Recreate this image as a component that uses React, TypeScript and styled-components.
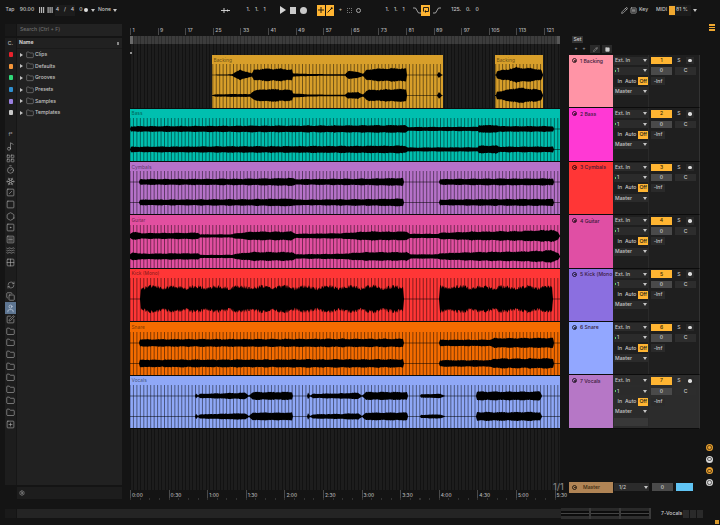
import React from 'react';
import styled, { createGlobalStyle } from 'styled-components';
import {
  Copy, Folder, Grid2x2, Hexagon, LayoutGrid, Music2, Pencil, RefreshCw, Settings, Snowflake,
  Square, SquareDot, SquareMenu, SquarePen, SquarePlus, SquareSlash, Timer, User, Waves,
} from 'lucide-react';

type Env = [number, number][];

interface ClipData {
  x0: number;
  x1: number;
  ch1: Env;
  ch2?: Env;
  mono?: boolean;
}

interface Track {
  name: string;
  strip: string;
  color: string;
  clips: ClipData[];
}

const GRID_LEFT = 130;
const BAR = 3.45;
const BODY_H = 44;

const backing1: Env = [[212, 0.3], [232, 0.7], [235, 2.5], [240, 4.5], [247, 3], [252, 1.5], [254, 5], [268, 6], [282, 5.5], [292, 5], [293, 1.5], [308, 1], [345, 0.7], [348, 3.5], [358, 3], [363, 1], [367, 5], [385, 6], [406, 6], [407, 0.3], [437, 0.3], [439, 3], [442, 0.3]];
const backing1b: Env = [[212, 0.3], [215, 1], [240, 1.4], [250, 1.2], [254, 4.5], [268, 6], [282, 5.5], [292, 5], [293, 2], [308, 1], [345, 0.7], [348, 3], [358, 3], [363, 1], [367, 5], [385, 5.5], [406, 6], [407, 0.3], [437, 0.3], [439, 3], [442, 0.3]];
const backing2: Env = [[496, 0.5], [497, 3.5], [518, 7], [532, 6], [541, 5], [543, 0.5]];
const bass: Env = [[130, 0.3], [131, 2.5], [258, 3], [292, 3], [405, 3.5], [408, 1.8], [478, 2], [479, 3.5], [497, 3.6], [499, 2.6], [553, 2.6], [554, 0.3], [560, 0.3]];
const cymbals: Env = [[130, 0.3], [139, 0.3], [140, 2.6], [252, 3], [292, 3.6], [296, 2.6], [365, 3], [403, 3.6], [404, 0.3], [439, 0.3], [440, 2.6], [478, 3], [553, 3.2], [554, 0.3], [560, 0.3]];
const guitar: Env = [[130, 2], [133, 3.8], [142, 2.6], [198, 3], [200, 1.5], [232, 1.5], [235, 2.4], [252, 4], [292, 4], [296, 2], [342, 2.5], [365, 4], [407, 4], [410, 2], [438, 2], [440, 3], [478, 4], [520, 4.5], [552, 5.6], [558, 3.5], [560, 0.3]];
const kick: Env = [[130, 0.3], [140, 0.3], [141, 14.5], [403, 14.5], [404, 0.3], [439, 0.3], [440, 14.5], [552, 14.5], [553, 0.3], [560, 0.3]];
const snare: Env = [[130, 0.3], [139, 0.3], [140, 3.4], [250, 3.6], [320, 3.8], [403, 3.8], [404, 0.3], [439, 0.3], [440, 3], [490, 3], [494, 4.4], [553, 4.6], [554, 0.3], [560, 0.3]];
const vocals: Env = [[130, 0.3], [195, 0.3], [196, 2.5], [198, 0.6], [200, 2], [218, 2.4], [245, 3], [249, 0.5], [253, 3.6], [292, 3.6], [293, 0.3], [307, 0.3], [308, 3.2], [310, 0.4], [313, 2], [340, 2.4], [358, 3], [362, 0.5], [366, 3.6], [407, 3.6], [408, 0.3], [420, 0.3], [421, 1.5], [440, 2], [445, 0.3], [476, 0.3], [477, 4], [540, 4], [542, 0.3], [560, 0.3]];

const tracks: Track[] = [
  { name: 'Backing', strip: '1 Backing', color: '#d89f2a', clips: [{ x0: 212, x1: 443, ch1: backing1, ch2: backing1b }, { x0: 495, x1: 543, ch1: backing2 }] },
  { name: 'Bass', strip: '2 Bass', color: '#00bfaf', clips: [{ x0: 130, x1: 560, ch1: bass }] },
  { name: 'Cymbals', strip: '3 Cymbals', color: '#b672c9', clips: [{ x0: 130, x1: 560, ch1: cymbals }] },
  { name: 'Guitar', strip: '4 Guitar', color: '#e24fa0', clips: [{ x0: 130, x1: 560, ch1: guitar }] },
  { name: 'Kick (Mono)', strip: '5 Kick (Mono', color: '#ff3636', clips: [{ x0: 130, x1: 560, ch1: kick, mono: true }] },
  { name: 'Snare', strip: '6 Snare', color: '#f56c00', clips: [{ x0: 130, x1: 560, ch1: snare }] },
  { name: 'Vocals', strip: '7 Vocals', color: '#8fa8f7', clips: [{ x0: 130, x1: 560, ch1: vocals }] },
];

const stripColors = ['#ff94a6', '#ff39d4', '#ff3636', '#e04fa4', '#8b6fe0', '#92a7ff', '#b677c6'];
const swatches = ['#e8222c', '#f5963a', '#2fd878', '#2e8fd0', '#9a80e0', '#c8c8c8'];
const browserItems = ['Clips', 'Defaults', 'Grooves', 'Presets', 'Samples', 'Templates'];
const barLabels = ['1', '9', '17', '25', '33', '41', '49', '57', '65', '73', '81', '89', '97', '105', '113', '121'];
const timeLabels = ['0:00', '0:30', '1:00', '1:30', '2:00', '2:30', '3:00', '3:30', '4:00', '4:30', '5:00', '5:30'];
const upperIcons = [Music2, LayoutGrid, Timer, Snowflake, SquareSlash, Square, Hexagon, SquareDot, SquareMenu, Waves, Grid2x2];
const lowerIcons = [Copy, User, SquarePen, Folder, Folder, Folder, Folder, Folder, Folder, Folder, Folder, SquarePlus];

const noise = (x: number, seed: number) => {
  const v = Math.sin(x * 12.9898 + seed * 78.233) * 43758.5453;
  return v - Math.floor(v);
};

const envAt = (pts: Env, x: number) => {
  if (x <= pts[0][0]) return pts[0][1];
  for (let i = 1; i < pts.length; i++) {
    if (x <= pts[i][0]) {
      const [ax, ay] = pts[i - 1];
      const [bx, by] = pts[i];
      return ay + ((by - ay) * (x - ax)) / (bx - ax || 1);
    }
  }
  return pts[pts.length - 1][1];
};

const wavePath = (pts: Env, x0: number, x1: number, cy: number, seed: number, mono?: boolean) => {
  const top: string[] = [];
  const bottom: string[] = [];
  for (let x = x0; x <= x1; x += 0.5) {
    const base = envAt(pts, x);
    let amp = base;
    if (base > 1) {
      const slow = 0.96 + 0.06 * Math.sin(x * 0.45 + seed);
      amp = base * slow * (1.02 + 0.18 * noise(x, seed));
    }
    if (mono && base > 1) {
      const pulse = Math.abs(Math.sin((Math.PI * (x - 141)) / 22));
      amp = base * (0.8 + 0.2 * pulse) * (0.72 + 0.28 * noise(x, seed));
    }
    top.push(`${(x - x0).toFixed(1)} ${(cy - amp).toFixed(2)}`);
    bottom.unshift(`${(x - x0).toFixed(1)} ${(cy + amp * (mono ? 1 : 0.95)).toFixed(2)}`);
  }
  return `M${top.join('L')}L${bottom.join('L')}Z`;
};

const gridPath = (x0: number, x1: number) => {
  let d = '';
  for (let n = 0; GRID_LEFT + n * BAR < x1; n++) {
    const x = GRID_LEFT + n * BAR;
    if (x >= x0) d += `M${(x - x0).toFixed(2)} 0V${BODY_H}`;
  }
  return d;
};

const Wave: React.FC<{ clip: ClipData; seed: number }> = ({ clip, seed }) => {
  const { x0, x1, ch1, ch2, mono } = clip;
  const w = x1 - x0;
  return (
    <WaveSvg viewBox={`0 0 ${w} ${BODY_H}`} preserveAspectRatio="none">
      <path d={gridPath(x0, x1)} stroke="#000" strokeOpacity={0.6} strokeWidth={0.8} fill="none" />
      {mono ? (
        <path d={wavePath(ch1, x0, x1, 21, seed, true)} fill="#000" />
      ) : (
        <>
          <path d={wavePath(ch1, x0, x1, 11, seed)} fill="#000" />
          <path d={wavePath(ch2 || ch1, x0, x1, 31.5, seed + 3)} fill="#000" />
        </>
      )}
    </WaveSvg>
  );
};

const Caret = styled.span`
  display: inline-block;
  flex: none;
  width: 0;
  height: 0;
  border-left: 2px solid transparent;
  border-right: 2px solid transparent;
  border-top: 3px solid #c4c4c4;
`;

const TransportIcon: React.FC<{ kind: string }> = ({ kind }) => {
  if (kind === 'follow') {
    return (
      <svg width="9" height="5" viewBox="0 0 9 5">
        <path d="M0 2.5H9M3 0V5M6.5 1.5V3.5" stroke="#ddd" strokeWidth="0.9" fill="none" />
      </svg>
    );
  }
  if (kind === 'bars') {
    return (
      <svg width="14" height="6" viewBox="0 0 14 6">
        <path d="M0 0H1.2V6H0ZM2 0H3.2V6H2ZM4 0H5.2V6H4ZM8.5 0H9.7V6H8.5ZM10.5 0H11.7V6H10.5ZM12.5 0H13.7V6H12.5Z" fill="#b5b5b5" />
      </svg>
    );
  }
  if (kind === 'fadeOut') {
    return (
      <svg width="8" height="7" viewBox="0 0 8 7">
        <path d="M0 1H2.5L5.5 6H8" stroke="#c4c4c4" strokeWidth="0.8" fill="none" />
      </svg>
    );
  }
  if (kind === 'fadeIn') {
    return (
      <svg width="8" height="7" viewBox="0 0 8 7">
        <path d="M0 6H2.5L5.5 1H8" stroke="#c4c4c4" strokeWidth="0.8" fill="none" />
      </svg>
    );
  }
  if (kind === 'loop') {
    return (
      <svg width="6" height="6" viewBox="0 0 6 6">
        <path d="M.5 4.5V.5H5.5V4.5H2.5" stroke="#111" strokeWidth="0.9" fill="none" />
        <path d="M3 3V6L1.4 4.5Z" fill="#111" />
      </svg>
    );
  }
  if (kind === 'draw') {
    return (
      <svg width="6" height="6" viewBox="0 0 6 6">
        <path d="M.5 5.5L4.5 1.5" stroke="#111" strokeWidth="0.9" />
        <circle cx="4.7" cy="1.3" r="1" fill="#111" />
      </svg>
    );
  }
  return (
    <svg width="6" height="6" viewBox="0 0 6 6">
      <path d="M3 0V6M0 3H6" stroke="#111" strokeWidth="0.9" />
    </svg>
  );
};

const MixerStrip: React.FC<{ track: Track; color: string; index: number; selected: boolean }> = ({ track, color, index, selected }) => (
  <Strip $selected={selected}>
    <StripTitle $color={color}>
      <ActivatorDot />
      <StripName>{track.strip}</StripName>
    </StripTitle>
    <StripInputs>
      <SelectBox>Ext. In<Caret /></SelectBox>
      <SelectBox><SendLabel><GreenTick />1</SendLabel><Caret /></SelectBox>
      <MonitorRow>
        <MonitorBtn>In</MonitorBtn>
        <MonitorBtn>Auto</MonitorBtn>
        <MonitorBtn $on>Off</MonitorBtn>
      </MonitorRow>
      <SelectBox>Master<Caret /></SelectBox>
      {selected && <BlankBox />}
    </StripInputs>
    <StripFaders>
      <FaderRow>
        <TrackNumber>{index + 1}</TrackNumber>
        <SoloLabel>S</SoloLabel>
        <ArmDot />
      </FaderRow>
      <FaderRow>
        <VolumeBox>0</VolumeBox>
        <PanBox>C</PanBox>
      </FaderRow>
      <FaderRow>
        <InfBox>-Inf</InfBox>
      </FaderRow>
    </StripFaders>
  </Strip>
);

const App: React.FC = () => {
  return (
    <Page>
      <GlobalStyle />
      <TopBar>
        <Cell $w={10} $ml={5}>Tap</Cell>
        <Cell $w={14} $ml={5}>90.00</Cell>
        <Cell $w={14} $ml={5}><TransportIcon kind="bars" /></Cell>
        <BoxedCell $w={20} $ml={2}><Spaced>4 / 4</Spaced></BoxedCell>
        <Cell $w={9} $ml={4}>0<RecDot $size={4} $color="#ddd" /></Cell>
        <Cell $w={6} $ml={2}><Caret /></Cell>
        <Cell $w={13} $ml={2}>None</Cell>
        <Cell $w={6} $ml={1}><Caret /></Cell>

        <Cell $w={9} $ml={103}><TransportIcon kind="follow" /></Cell>
        <Cell $w={26} $ml={13}><Spaced>1. 1. 1</Spaced></Cell>
        <Cell $w={6} $ml={11}><PlayShape /></Cell>
        <Cell $w={6} $ml={4}><StopShape /></Cell>
        <Cell $w={7} $ml={4}><RecDot $size={7} $color="#c9c9c9" /></Cell>
        <OrangeCell $w={9} $ml={10}><TransportIcon kind="plus" /></OrangeCell>
        <OrangeCell $w={9} $ml={0}><TransportIcon kind="draw" /></OrangeCell>
        <Cell $w={5} $ml={3}>+</Cell>
        <Cell $w={5} $ml={4}><DottedBox /></Cell>
        <Cell $w={5} $ml={4}><RingShape /></Cell>
        <Cell $w={26} $ml={21}><Spaced>1. 1. 1</Spaced></Cell>
        <Cell $w={8} $ml={5}><TransportIcon kind="fadeOut" /></Cell>
        <OrangeCell $w={10} $ml={0}><TransportIcon kind="loop" /></OrangeCell>
        <Cell $w={8} $ml={2}><TransportIcon kind="fadeIn" /></Cell>
        <Cell $w={34} $ml={7}><Spaced>125. 0. 0</Spaced></Cell>

        <Cell $w={7} $ml={139}><Pencil size={7} color="#ddd" strokeWidth={2} /></Cell>
        <Cell $w={7} $ml={2}><SquareMenu size={7} color="#ccc" strokeWidth={2} /></Cell>
        <Cell $w={9} $ml={2}>Key</Cell>
        <Cell $w={11} $ml={8}>MIDI</Cell>
        <CpuMeter><CpuFill style={{ width: 6 }} />81 %</CpuMeter>
        <Cell $w={5} $ml={1}><Caret /></Cell>
      </TopBar>

      <Main>
        <Sidebar>
          <SearchRow>
            <SearchLead />
            <SearchBox>Search (Ctrl + F)</SearchBox>
          </SearchRow>
          <BrowserPanel>
            <SideStrip>
              <StripHeader>C.</StripHeader>
              {swatches.map((c) => (
                <SwatchRow key={c}><Swatch $color={c} /></SwatchRow>
              ))}
              <IconGroup $top={10.6}>
                <SwatchRow><SmallMark>f°</SmallMark></SwatchRow>
                {upperIcons.map((Icon, i) => (
                  <SwatchRow key={i}><Icon size={9} color="#b0b0b0" strokeWidth={1.6} /></SwatchRow>
                ))}
              </IconGroup>
              <IconGroup $top={10.8}>
                <SwatchRow><RefreshCw size={8} color="#b0b0b0" strokeWidth={1.6} /></SwatchRow>
                {lowerIcons.map((Icon, i) => (
                  <SwatchRow key={i} $active={i === 1}>
                    <Icon size={9} color={i === 1 ? '#d5deea' : '#b0b0b0'} strokeWidth={1.6} />
                  </SwatchRow>
                ))}
              </IconGroup>
            </SideStrip>
            <BrowserList>
              <BrowserHeader>
                <span>Name</span>
                <SortMark />
              </BrowserHeader>
              {browserItems.map((item) => (
                <BrowserRow key={item}>
                  <RightCaret />
                  <Folder size={8} color="#bdbdbd" strokeWidth={1.2} />
                  <span>{item}</span>
                </BrowserRow>
              ))}
            </BrowserList>
          </BrowserPanel>
          <InfoBox><Settings size={6} color="#aaa" strokeWidth={2} /></InfoBox>
        </Sidebar>

        <Arrange>
          <BarRuler>
            {barLabels.map((l) => (
              <BarMark key={l}>{l}</BarMark>
            ))}
          </BarRuler>
          <ScrubBar />
          <LaneGap><StartDot /></LaneGap>
          {tracks.map((track, t) => (
            <Lane key={track.name} $first={t === 0}>
              {track.clips.map((clip, c) => (
                <Clip
                  key={c}
                  $color={track.color}
                  $w={clip.x1 - clip.x0}
                  $gap={clip.x0 - (c === 0 ? GRID_LEFT : track.clips[c - 1].x1)}
                >
                  <ClipLabel>{track.name}</ClipLabel>
                  <Wave clip={clip} seed={t * 7 + c + 1} />
                </Clip>
              ))}
            </Lane>
          ))}
          <EmptyLanes />
          <TimeRuler>
            {timeLabels.map((l) => (
              <TimeMark key={l}>{l}</TimeMark>
            ))}
          </TimeRuler>
        </Arrange>

        <MixerColumn>
          <MixerHeader>
            <SetButton>Set</SetButton>
            <MixerTools>
              <ToolMark>+</ToolMark>
              <ToolMark>+</ToolMark>
              <ToolBox><Pencil size={5} color="#bbb" strokeWidth={2} /></ToolBox>
              <ToolBox><Square size={5} color="#ccc" fill="#ccc" /></ToolBox>
            </MixerTools>
          </MixerHeader>
          {tracks.map((track, i) => (
            <MixerStrip key={track.name} track={track} color={stripColors[i]} index={i} selected={i === 6} />
          ))}
          <MasterRow>
            <MasterTitle>
              <ActivatorDot />
              <MasterName>Master</MasterName>
            </MasterTitle>
            <MasterSelect>1/2<Caret /></MasterSelect>
            <VolumeBox>0</VolumeBox>
            <CueBox />
          </MasterRow>
          <PageCount>1/1</PageCount>
        </MixerColumn>

        <RightRail>
          <MenuIcon>
            <MenuLine />
            <MenuLine />
            <MenuLine />
          </MenuIcon>
          <RailButtons>
            <RailButton $color="#e8a030" />
            <RailButton $color="#d8d8d8" />
            <RailButton $color="#e8a030" />
            <RailButton $color="#d8d8d8" />
          </RailButtons>
        </RightRail>
      </Main>

      <BottomBar>
        <BottomLead />
        <StatusField />
        <Overview />
        <SelectedName>7-Vocals</SelectedName>
        <MidiGrid>
          {[0, 1, 2].map((i) => <MidiCell key={i} />)}
        </MidiGrid>
        <CornerMark />
      </BottomBar>
    </Page>
  );
};

const GlobalStyle = createGlobalStyle`
  html, body {
    margin: 0;
    padding: 0;
    background: #141414;
  }
  * {
    box-sizing: border-box;
  }
`;

const Page = styled.div`
  width: 720px;
  height: 525px;
  overflow: hidden;
  display: flex;
  flex-direction: column;
  background: #141414;
  color: #c4c4c4;
  font-family: "Inter", "Liberation Sans", sans-serif;
  font-size: 5.1px;
  font-weight: 500;
  line-height: 1;
`;

const TopBar = styled.div`
  display: flex;
  align-items: center;
  flex: none;
  height: 22px;
  padding-bottom: 2px;
`;

const Cell = styled.div<{ $w: number; $ml: number }>`
  display: flex;
  align-items: center;
  justify-content: center;
  gap: 1px;
  flex: none;
  white-space: nowrap;
  width: ${(p) => p.$w}px;
  margin-left: ${(p) => p.$ml}px;
`;

const BoxedCell = styled(Cell)`
  height: 11px;
  background: #1c1c1c;
`;

const OrangeCell = styled(Cell)`
  height: 11px;
  background: #ffb532;
  border-right: 1px solid #141414;
`;

const Spaced = styled.span`
  word-spacing: 3.5px;
`;

const RecDot = styled.span<{ $size: number; $color: string }>`
  display: inline-block;
  width: ${(p) => p.$size}px;
  height: ${(p) => p.$size}px;
  border-radius: 50%;
  background: ${(p) => p.$color};
`;

const PlayShape = styled.span`
  width: 0;
  height: 0;
  border-top: 4px solid transparent;
  border-bottom: 4px solid transparent;
  border-left: 6px solid #d4d4d4;
`;

const StopShape = styled.span`
  width: 6px;
  height: 7px;
  background: #c9c9c9;
`;

const DottedBox = styled.span`
  width: 5px;
  height: 5px;
  border: 1px dotted #777;
`;

const RingShape = styled.span`
  width: 5px;
  height: 5px;
  border-radius: 50%;
  border: 1px solid #aaa;
`;

const CpuMeter = styled.div`
  position: relative;
  flex: none;
  width: 22px;
  height: 11px;
  margin-left: 2px;
  padding-left: 7px;
  display: flex;
  align-items: center;
  background: #1c1c1c;
`;

const CpuFill = styled.span`
  position: absolute;
  left: 0;
  top: 1px;
  bottom: 1px;
  background: #f0a830;
`;

const Main = styled.div`
  display: flex;
  flex: none;
  height: 483px;
`;

const Sidebar = styled.div`
  flex: none;
  width: 130px;
  padding: 2px 8px 0 5px;
  display: flex;
  flex-direction: column;
`;

const SearchRow = styled.div`
  display: flex;
  flex: none;
  height: 12px;
  gap: 1px;
  margin-bottom: 2px;
`;

const SearchLead = styled.div`
  flex: none;
  width: 11px;
  background: #191919;
`;

const SearchBox = styled.div`
  flex: 1;
  display: flex;
  align-items: center;
  padding-left: 3px;
  background: #222;
  color: #6e6e6e;
`;

const BrowserPanel = styled.div`
  display: flex;
  flex: none;
  height: 447px;
  background: #212121;
`;

const SideStrip = styled.div`
  flex: none;
  width: 12px;
  display: flex;
  flex-direction: column;
  background: #1d1d1d;
  border-right: 1px solid #161616;
`;

const StripHeader = styled.div`
  display: flex;
  align-items: center;
  justify-content: center;
  height: 11px;
  color: #bbb;
`;

const SwatchRow = styled.div<{ $active?: boolean }>`
  display: flex;
  align-items: center;
  justify-content: center;
  flex: none;
  height: 11.6px;
  background: ${(p) => (p.$active ? '#5d7591' : 'transparent')};
`;

const Swatch = styled.span<{ $color: string }>`
  width: 4px;
  height: 5px;
  border-radius: 1px;
  background: ${(p) => p.$color};
`;

const SmallMark = styled.span`
  color: #999;
  font-size: 5px;
`;

const IconGroup = styled.div<{ $top: number }>`
  display: flex;
  flex-direction: column;
  margin-top: ${(p) => p.$top}px;
`;

const BrowserList = styled.div`
  flex: 1;
  display: flex;
  flex-direction: column;
`;

const BrowserHeader = styled.div`
  display: flex;
  align-items: center;
  justify-content: space-between;
  flex: none;
  height: 11px;
  padding: 0 3px 0 2px;
  font-weight: 700;
  color: #d0d0d0;
  border-bottom: 1px solid #1a1a1a;
`;

const SortMark = styled.span`
  width: 2px;
  height: 3px;
  background: #888;
`;

const BrowserRow = styled.div`
  display: flex;
  align-items: center;
  flex: none;
  height: 11.6px;
  padding-left: 3px;
  gap: 1.5px;
  color: #c4c4c4;
`;

const RightCaret = styled.span`
  flex: none;
  width: 0;
  height: 0;
  margin-right: 1px;
  border-top: 2px solid transparent;
  border-bottom: 2px solid transparent;
  border-left: 3px solid #c4c4c4;
`;

const InfoBox = styled.div`
  display: flex;
  align-items: center;
  flex: none;
  height: 12px;
  margin: 2px 0 0 12px;
  padding-left: 2px;
  background: #1d1d1d;
`;

const Arrange = styled.div`
  flex: none;
  width: 430px;
  display: flex;
  flex-direction: column;
`;

const BarRuler = styled.div`
  display: flex;
  align-items: flex-end;
  flex: none;
  height: 14px;
  padding-bottom: 1px;
`;

const BarMark = styled.div`
  flex: none;
  width: 27.6px;
  height: 7px;
  padding: 0 0 0 1.5px;
  color: #b4b4b4;
  border-left: 1px solid #4a4a4a;
`;

const ScrubBar = styled.div`
  flex: none;
  height: 8px;
  background:
    linear-gradient(90deg, #6a6a6a 0 3px, transparent 3px calc(100% - 3px), #565656 calc(100% - 3px)),
    repeating-linear-gradient(90deg, #2e2e2e 0 1px, #3c3c3c 1px 3.45px);
`;

const emptyGrid = 'repeating-linear-gradient(90deg, #121212 0 1px, #1d1d1d 1px 3.45px)';

const LaneGap = styled.div`
  position: relative;
  flex: none;
  height: 11px;
  background: ${emptyGrid};
`;

const StartDot = styled.span`
  position: absolute;
  left: 0;
  bottom: 1px;
  width: 2px;
  height: 2px;
  border-radius: 50%;
  background: #bbb;
`;

const Lane = styled.div<{ $first: boolean }>`
  display: flex;
  flex: none;
  height: ${(p) => (p.$first ? 53.7 : 53.4)}px;
  border-bottom: 1px solid #0c0c0c;
  background: ${emptyGrid};
`;

const Clip = styled.div<{ $color: string; $w: number; $gap: number }>`
  display: flex;
  flex-direction: column;
  flex: none;
  overflow: hidden;
  width: ${(p) => p.$w}px;
  margin-left: ${(p) => p.$gap}px;
  background: ${(p) => p.$color};
`;

const ClipLabel = styled.div`
  flex: none;
  height: 9.4px;
  padding: 2.5px 0 0 1.5px;
  font-size: 4.8px;
  color: rgba(0, 0, 0, 0.48);
  white-space: nowrap;
`;

const WaveSvg = styled.svg`
  display: block;
  flex: none;
  width: 100%;
  height: 44px;
`;

const EmptyLanes = styled.div`
  flex: none;
  height: 61px;
  background: ${emptyGrid};
`;

const TimeRuler = styled.div`
  display: flex;
  flex: none;
  height: 10px;
  background: repeating-linear-gradient(90deg, #333 0 1px, transparent 1px 9.65px) 0 100% / 100% 2px no-repeat;
`;

const TimeMark = styled.div`
  flex: none;
  width: 38.6px;
  height: 8px;
  padding: 2.5px 0 0 1px;
  font-size: 4.8px;
  color: #b4b4b4;
  border-left: 1px solid #4a4a4a;
`;

const MixerColumn = styled.div`
  position: relative;
  flex: none;
  width: 131px;
  margin-left: 9px;
  display: flex;
  flex-direction: column;
`;

const MixerHeader = styled.div`
  flex: none;
  height: 33px;
  padding: 14px 0 0 3px;
`;

const SetButton = styled.div`
  display: flex;
  align-items: center;
  justify-content: center;
  width: 11px;
  height: 7px;
  background: #333;
  color: #ccc;
`;

const MixerTools = styled.div`
  display: flex;
  align-items: center;
  margin-top: 2px;
  height: 8px;
`;

const ToolMark = styled.span`
  width: 8px;
  color: #999;
  text-align: center;
`;

const ToolBox = styled.span`
  display: flex;
  align-items: center;
  justify-content: center;
  width: 10px;
  height: 8px;
  margin-left: 2px;
  background: #2a2a2a;
`;

const Strip = styled.div<{ $selected: boolean }>`
  display: flex;
  flex: none;
  height: 53.4px;
  background: ${(p) => (p.$selected ? '#2c2c2c' : '#1f1f1f')};
  border-bottom: 1px solid #0c0c0c;
  border-right: 1px solid #333;
`;

const StripTitle = styled.div<{ $color: string }>`
  display: flex;
  align-items: flex-start;
  gap: 3px;
  flex: none;
  width: 44px;
  padding: 3px 0 0 3px;
  overflow: hidden;
  background: ${(p) => p.$color};
  color: #3a1a3a;
`;

const ActivatorDot = styled.span`
  position: relative;
  flex: none;
  width: 5px;
  height: 5px;
  border-radius: 50%;
  border: 0.7px solid rgba(0, 0, 0, 0.75);

  &::after {
    content: '';
    position: absolute;
    left: 1px;
    top: 1px;
    width: 1.6px;
    height: 1.6px;
    border-radius: 50%;
    background: rgba(0, 0, 0, 0.75);
  }
`;

const StripName = styled.span`
  white-space: nowrap;
  padding-top: 0.5px;
`;

const StripInputs = styled.div`
  display: grid;
  grid-auto-rows: 10.3px;
  flex: none;
  width: 36px;
  padding: 0.5px 1px 0 1px;
  border-right: 1px solid #2a2a2a;
`;

const SelectBox = styled.div`
  display: flex;
  align-items: center;
  justify-content: space-between;
  height: 8px;
  margin-top: 1px;
  padding: 0 1px;
  background: #2b2b2b;
  color: #c8c8c8;
`;

const SendLabel = styled.span`
  display: flex;
  align-items: center;
  gap: 1px;
`;

const GreenTick = styled.span`
  width: 1px;
  height: 2px;
  background: #5ad06a;
`;

const MonitorRow = styled.div`
  display: flex;
  align-items: center;
  justify-content: space-between;
  padding-left: 2px;
`;

const MonitorBtn = styled.span<{ $on?: boolean }>`
  display: flex;
  align-items: center;
  justify-content: center;
  height: 8px;
  padding: 0 1.5px;
  background: ${(p) => (p.$on ? '#ffb532' : 'transparent')};
  color: ${(p) => (p.$on ? '#141414' : '#c8c8c8')};
`;

const BlankBox = styled.div`
  height: 8px;
  margin-top: 1px;
  background: #383838;
`;

const StripFaders = styled.div`
  display: grid;
  grid-auto-rows: 10.3px;
  flex: 1;
  padding: 0.5px 0 0 2px;
`;

const FaderRow = styled.div`
  display: flex;
  align-items: center;
`;

const TrackNumber = styled.div`
  display: flex;
  align-items: center;
  justify-content: center;
  width: 21px;
  height: 7.5px;
  background: #ffb532;
  color: #3a2a00;
`;

const SoloLabel = styled.span`
  width: 14px;
  text-align: center;
`;

const ArmDot = styled.span`
  display: flex;
  align-items: center;
  justify-content: center;
  width: 8px;
  height: 7.5px;
  background: #2a2a2a;

  &::after {
    content: '';
    width: 3.5px;
    height: 3.5px;
    border-radius: 50%;
    background: #ddd;
  }
`;

const VolumeBox = styled.div`
  display: flex;
  align-items: center;
  justify-content: center;
  flex: none;
  width: 21px;
  height: 7.5px;
  background: #4a4a4a;
  color: #cfcfcf;
`;

const PanBox = styled.div`
  display: flex;
  align-items: center;
  justify-content: center;
  flex: none;
  width: 21px;
  height: 7.5px;
  margin-left: 3px;
  background: #2d2d2d;
  color: #ccc;
`;

const InfBox = styled.div`
  display: flex;
  align-items: center;
  justify-content: center;
  width: 14px;
  height: 8px;
  background: #2a2a2a;
  color: #c8c8c8;
`;

const MasterRow = styled.div`
  display: flex;
  align-items: center;
  flex: none;
  height: 11px;
  margin-top: 53px;
`;

const MasterTitle = styled.div`
  display: flex;
  align-items: center;
  gap: 6px;
  flex: none;
  width: 44px;
  height: 11px;
  padding-left: 3px;
  background: #b08455;
`;

const MasterName = styled.span`
  color: #3a2810;
`;

const MasterSelect = styled.div`
  display: flex;
  align-items: center;
  justify-content: space-between;
  flex: none;
  width: 35px;
  height: 8px;
  margin: 0 3px 0 1px;
  padding: 0 1px 0 5px;
  background: #2b2b2b;
`;

const CueBox = styled.div`
  flex: none;
  width: 17px;
  height: 7.5px;
  margin-left: 3px;
  background: #60c4f4;
`;

const PageCount = styled.span`
  position: absolute;
  left: -16px;
  bottom: 14px;
  font-size: 9px;
  color: #808080;
`;

const RightRail = styled.div`
  flex: none;
  width: 20px;
  display: flex;
  flex-direction: column;
  align-items: center;
  padding-bottom: 19px;
`;

const MenuIcon = styled.div`
  display: flex;
  flex-direction: column;
  flex: none;
  gap: 1px;
  width: 6px;
  margin: 2px 0 0 4px;
`;

const MenuLine = styled.span`
  flex: none;
  height: 1.5px;
  background: #f0a830;
`;

const RailButtons = styled.div`
  display: flex;
  flex-direction: column;
  gap: 4.7px;
  margin-top: auto;
  margin-right: 1px;
`;

const RailButton = styled.span<{ $color: string }>`
  display: flex;
  align-items: center;
  justify-content: center;
  width: 7px;
  height: 7px;
  border-radius: 50%;
  background: ${(p) => p.$color};

  &::after {
    content: '';
    width: 2.5px;
    height: 2.5px;
    border-radius: 50%;
    border: 0.6px solid rgba(0, 0, 0, 0.55);
  }
`;

const BottomBar = styled.div`
  position: relative;
  display: flex;
  align-items: center;
  flex: none;
  height: 20px;
  padding: 0 0 3px 5px;
`;

const BottomLead = styled.div`
  flex: none;
  width: 11px;
  height: 9px;
  background: #1a1a1a;
`;

const StatusField = styled.div`
  flex: none;
  width: 544px;
  height: 9px;
  margin-left: 1px;
  background: #242424;
`;

const Overview = styled.div`
  flex: none;
  width: 90px;
  height: 11px;
  background:
    repeating-linear-gradient(90deg, transparent 0 28px, #3a3a3a 28px 30px),
    linear-gradient(#2a2a2a 0 3px, #0c0c0c 3px 5px, #444 5px 6px, #0c0c0c 6px 8px, #2e2e2e 8px);
`;

const SelectedName = styled.span`
  flex: none;
  width: 21px;
  margin-left: 10px;
  color: #cfcfcf;
  white-space: nowrap;
`;

const MidiGrid = styled.div`
  display: flex;
  gap: 1px;
  margin-left: 1px;
`;

const MidiCell = styled.span`
  width: 6px;
  height: 8px;
  background: #2a2a2a;
`;

const CornerMark = styled.span`
  position: absolute;
  right: 1px;
  bottom: 1px;
  width: 4px;
  height: 4px;
  background: #d99a2c;
`;

export default App;
